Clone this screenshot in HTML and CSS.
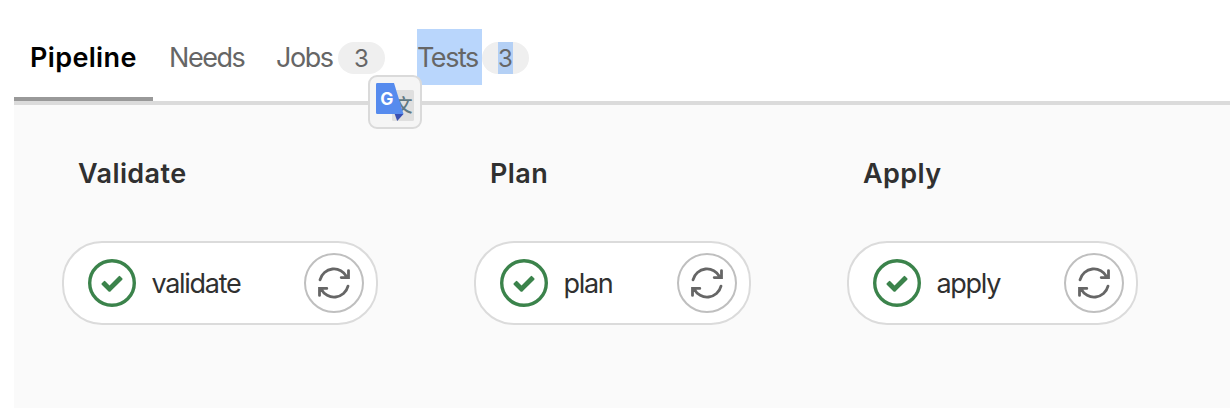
FILE: index.html
```html
<!DOCTYPE html>
<html lang="en">
<head>
<meta charset="utf-8">
<title>Pipeline</title>
<link rel="stylesheet" href="styles.css">
</head>
<body>
<svg class="defs" width="0" height="0">
  <symbol id="success" viewBox="0 0 48 48">
    <circle cx="24" cy="24" r="22.3" fill="#fff" stroke="#3b834b" stroke-width="3.4"/>
    <path fill="#3b834b" transform="scale(3.4286)" d="M6.278 7.697L5.045 6.464a.296.296 0 0 0-.42-.002l-.613.614a.298.298 0 0 0 .002.42l1.91 1.909a.5.5 0 0 0 .703.005l.265-.265L9.997 6.04a.291.291 0 0 0-.009-.408l-.614-.614a.29.29 0 0 0-.408-.009L6.278 7.697z"/>
  </symbol>
  <symbol id="retry" viewBox="0 0 32 32">
    <g fill="none" stroke="#666" stroke-width="2.8" stroke-linecap="round" stroke-linejoin="miter">
      <path d="M2 12.800A14.400 14.400 0 0 1 28.800 9.800M30.500 3.600v7H23.200"/>
      <path d="M30 19.200A14.400 14.400 0 0 1 3.200 22.200M1.500 28.400v-7H8.800"/>
    </g>
  </symbol>
</svg>
<nav class="tabs">
  <a class="tab active"><span class="label">Pipeline</span></a>
  <a class="tab needs"><span class="label">Needs</span></a>
  <a class="tab jobs"><span class="label">Jobs</span><span class="badge">3</span></a>
  <a class="tab tests"><span class="label selected">Tests</span><span class="badge"><span class="selected-count">3</span></span></a>
  <div class="translate">
    <svg width="38" height="38" viewBox="0 0 38 38">
      <rect x="16" y="7" width="22" height="31" rx="1.5" fill="#dfdfdf"/>
      <text class="han" x="18.500" y="29">文</text>
      <path d="M1.2 0H18l9.5 31H1.2Q0 31 0 29.800V1.200Q0 0 1.200 0z" fill="#568bee"/>
      <path d="M18.700 31h8.800L21.200 38z" fill="#3a50b2"/>
      <text class="latin" x="4.300" y="22">G</text>
    </svg>
  </div>
</nav>
<main class="graph">
  <section class="stage validate">
    <h2>Validate</h2>
    <div class="job"><svg class="status"><use href="#success"/></svg><span class="name">validate</span><button class="retry" aria-label="Retry"><svg><use href="#retry"/></svg></button></div>
  </section>
  <section class="stage plan">
    <h2>Plan</h2>
    <div class="job"><svg class="status"><use href="#success"/></svg><span class="name">plan</span><button class="retry" aria-label="Retry"><svg><use href="#retry"/></svg></button></div>
  </section>
  <section class="stage apply">
    <h2>Apply</h2>
    <div class="job"><svg class="status"><use href="#success"/></svg><span class="name">apply</span><button class="retry" aria-label="Retry"><svg><use href="#retry"/></svg></button></div>
  </section>
</main>
</body>
</html>
```
FILE: styles.css
```css
* { box-sizing: border-box; }
body {
  margin: 0;
  height: 408px;
  padding-left: 14px;
  display: flex;
  flex-direction: column;
  overflow: hidden;
  background: #fff;
  font-family: Inter, "Liberation Sans", sans-serif;
  font-size: 27px;
  color: #303030;
}
.defs { position: absolute; }
.tabs {
  position: relative;
  flex: none;
  display: flex;
  height: 105px;
  border-bottom: 4px solid #dbdbdb;
}
.tab {
  display: flex;
  align-items: flex-start;
  height: 101px;
  padding: 29px 16px 0;
  color: #666;
  letter-spacing: -1.45px;
  white-space: nowrap;
}
.label {
  flex: none;
  height: 56px;
  line-height: 58px;
}
.active {
  width: 139px;
  color: #000;
  font-weight: 600;
  letter-spacing: 0.35px;
  border-bottom: 4px solid #999;
}
.needs { width: 107px; }
.jobs { width: 134px; }
.jobs .label { width: 62px; }
.tests { padding-left: 23px; }
.tests .label { width: 65px; }
.selected { background: #b9d6fc; }
.badge {
  flex: none;
  display: flex;
  justify-content: center;
  width: 47px;
  height: 32px;
  margin-top: 13px;
  border-radius: 16px;
  background: #efefef;
  font-size: 24px;
  line-height: 33px;
  letter-spacing: 0;
}
.selected-count { width: 15px; background: #b4d0f5; }
.translate {
  position: absolute;
  left: 354px;
  top: 75px;
  width: 54px;
  height: 54px;
  padding: 6px;
  border: 2px solid #dadada;
  border-radius: 9px;
  background: #f5f5f5;
}
.translate svg { display: block; }
.latin { font: 700 17.5px Inter, sans-serif; fill: #fff; }
.han { font: 500 18px "Noto Sans CJK SC", sans-serif; fill: #607983; }
.graph {
  flex: 1;
  display: flex;
  align-items: flex-start;
  gap: 96px;
  padding: 49px 0 0 48px;
  background: #fafafa;
}
.stage { flex: none; }
.stage.validate { width: 316px; }
.stage.plan { width: 277px; }
.stage.apply { width: 291px; }
h2 {
  margin: 0 0 47px;
  padding-left: 16px;
  font-size: 27px;
  line-height: 40px;
  font-weight: 600;
  letter-spacing: 0.4px;
}
.job {
  display: flex;
  align-items: center;
  height: 84px;
  padding: 0 12px 0 24px;
  border: 2px solid #dbdbdb;
  border-radius: 40px;
  background: #fff;
}
.status { flex: none; width: 48px; height: 48px; margin-right: 15.5px; }
.name { flex: 1; letter-spacing: -1.3px; line-height: 40px; padding-top: 2px; }
.retry {
  display: grid;
  place-items: center;
  width: 60px;
  height: 60px;
  padding: 0;
  border: 2px solid #bfbfbf;
  border-radius: 50%;
  background: #fff;
}
.retry svg { width: 32px; height: 32px; }
```
